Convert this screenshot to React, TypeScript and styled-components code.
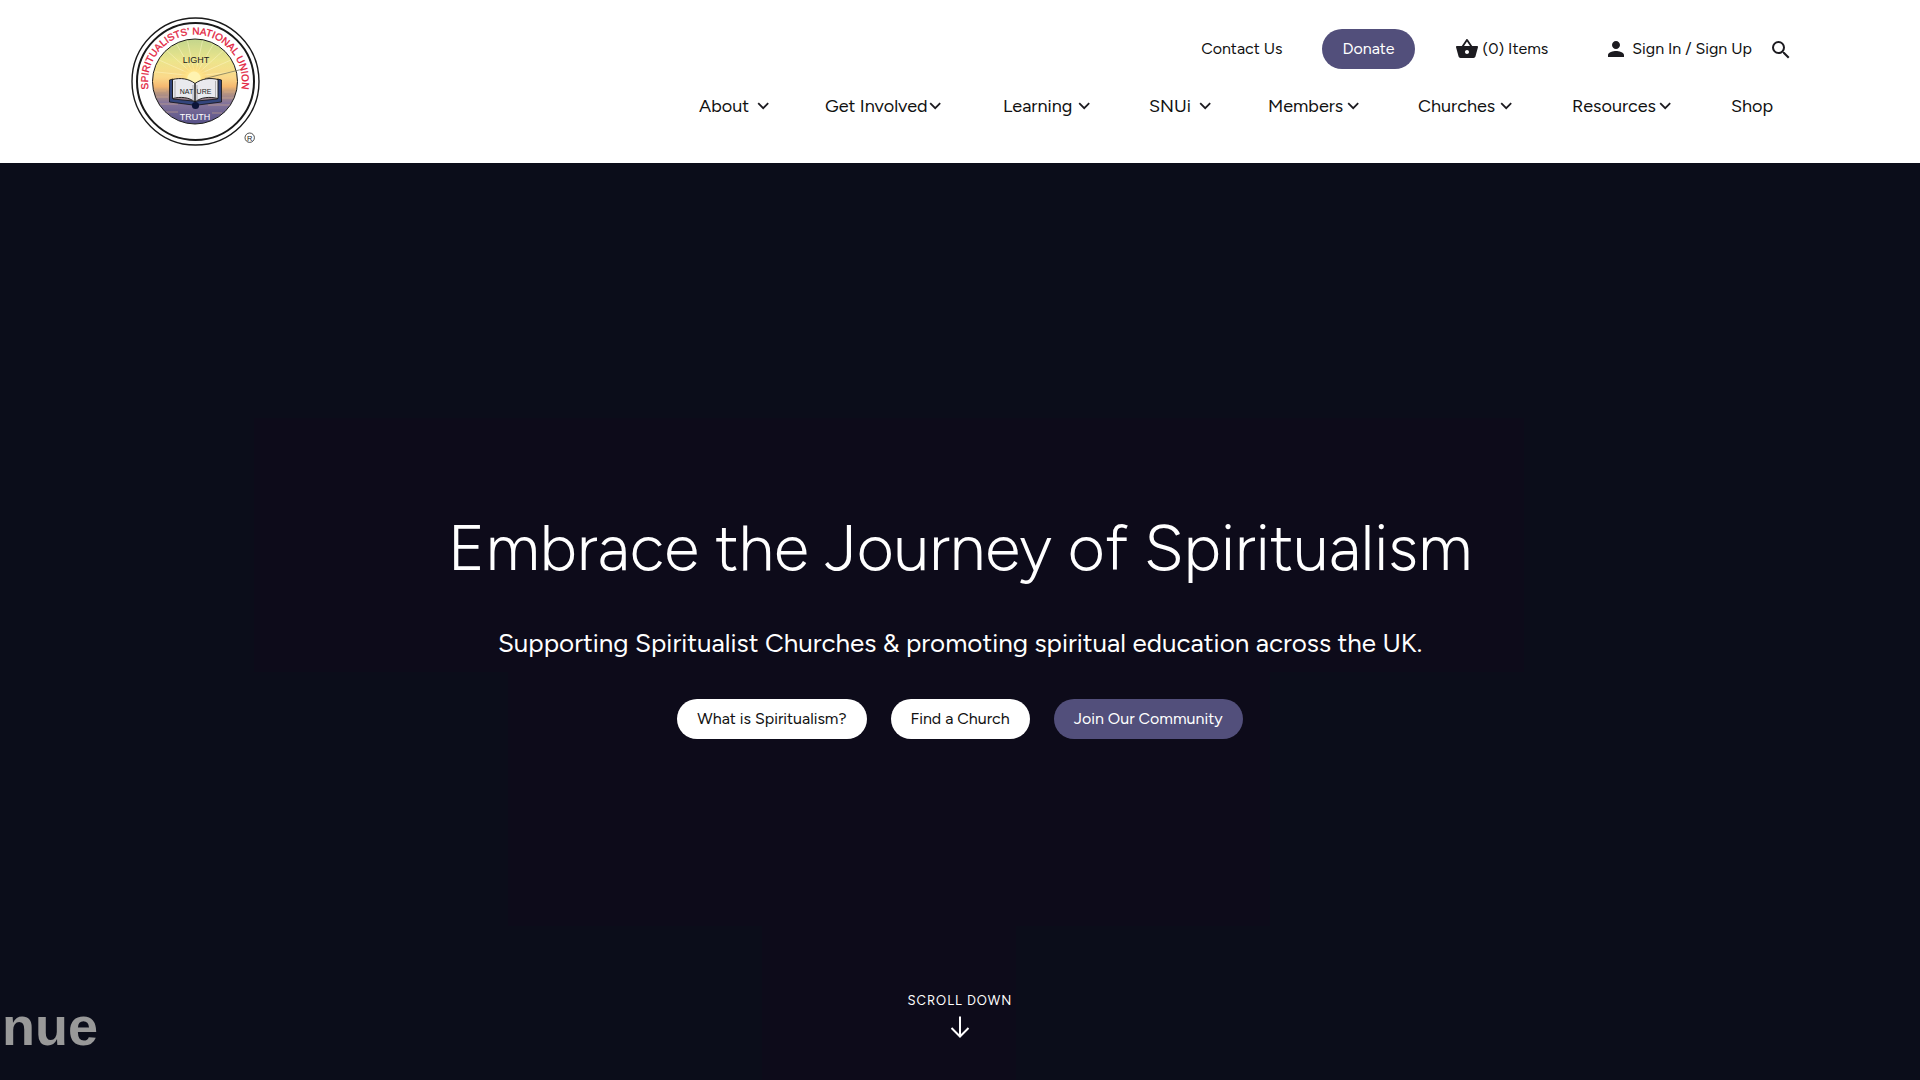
import React from 'react';
import styled, { createGlobalStyle } from 'styled-components';
import { MdPerson, MdSearch, MdShoppingBasket } from 'react-icons/md';

const GlobalStyle = createGlobalStyle`
  *, *::before, *::after { box-sizing: border-box; }
  body { margin: 0; background: #0b0d1a; font-family: Figtree, Roboto, "Liberation Sans", sans-serif; color: #111; }
  a { color: inherit; text-decoration: none; }
`;

const Page = styled.div`
  min-height: 100vh;
  display: flex;
  flex-direction: column;
`;

const Header = styled.header`
  background: #fff;
  padding: 16px 127px 15px 130px;
  display: flex;
  justify-content: space-between;
  align-items: flex-start;
`;

const LogoLink = styled.a`
  display: block;
  line-height: 0;
`;

const Menus = styled.div`
  display: flex;
  flex-direction: column;
  align-items: flex-end;
  padding-top: 13px;
`;

const UtilityBar = styled.div`
  display: flex;
  align-items: center;
  font-size: 16px;
  line-height: 24px;
`;

const UtilityLink = styled.a<{ $before?: number }>`
  display: flex;
  align-items: center;
  gap: 4px;
  margin-left: ${({ $before = 40 }) => $before}px;
`;

const UtilityIcon = styled.span`
  display: flex;
  font-size: 24px;
  color: #1c1b20;
`;

const SearchButton = styled.button`
  display: flex;
  margin: 0 0 0 17px;
  padding: 2px 0 0;
  border: 0;
  background: none;
  color: #1c1b20;
  font-size: 24px;
  cursor: pointer;
`;

const Pill = styled.a<{ $tone: 'light' | 'violet' }>`
  display: flex;
  align-items: center;
  height: 40px;
  padding: 0 20px;
  border-radius: 20px;
  font-size: 16px;
  line-height: 24px;
  white-space: nowrap;
  color: ${({ $tone }) => ($tone === 'light' ? '#111' : '#fff')};
  background: ${({ $tone }) => ($tone === 'light' ? '#fff' : '#524f7b')};
`;

const DonateSlot = styled.div`
  margin-left: 40px;
`;

const MainNav = styled.nav`
  margin-top: 24px;
  padding-right: 21px;
`;

const NavList = styled.ul`
  list-style: none;
  margin: 0;
  padding: 0;
  display: grid;
  grid-template-columns: 126px 178px 146px 119px 150px 154px 159px 41px;
`;

const NavLink = styled.a<{ $width: number }>`
  display: flex;
  align-items: center;
  justify-content: space-between;
  width: ${({ $width }) => $width}px;
  font-size: 18px;
  line-height: 26px;
  white-space: nowrap;
`;

const Hero = styled.main`
  --tile: 254px;
  --shade: linear-gradient(#0d0b1a, #0d0b1a);
  position: relative;
  flex: 1;
  display: grid;
  grid-template-rows: 1fr auto 1fr;
  justify-items: center;
  color: #fff;
  overflow: hidden;
  background-color: #0b0d1a;
  background-image: var(--shade), var(--shade), var(--shade);
  background-repeat: no-repeat;
  background-size: calc(5 * var(--tile)) var(--tile), calc(3 * var(--tile)) var(--tile), var(--tile) var(--tile);
  background-position: var(--tile) 255px, calc(2 * var(--tile)) 509px, calc(3 * var(--tile)) 763px;
`;

const HeroContent = styled.div`
  grid-row: 2;
  display: flex;
  flex-direction: column;
  align-items: center;
  gap: 36px;
  text-align: center;
`;

const Headline = styled.h1`
  margin: 0;
  font-size: 64px;
  line-height: 87px;
  font-weight: 300;
`;

const Tagline = styled.p`
  margin: 0;
  font-size: 26px;
  line-height: 32px;
`;

const Actions = styled.div`
  display: flex;
  gap: 24px;
  padding-top: 4px;
`;

const ScrollLink = styled.a`
  grid-row: 3;
  align-self: end;
  display: flex;
  flex-direction: column;
  align-items: center;
  gap: 4px;
  padding-bottom: 41px;
  font-size: 13px;
  line-height: 20px;
  letter-spacing: 1px;
`;

const Caption = styled.div`
  position: absolute;
  left: 2px;
  bottom: 24px;
  font-family: "Liberation Sans", Arial, sans-serif;
  font-weight: 700;
  font-size: 54px;
  line-height: 60px;
  color: #999;
`;

const Chevron = () => (
  <svg width="12" height="8" viewBox="0 0 12 8" fill="none" aria-hidden="true">
    <path d="M1.200 1.200 6.200 6.200l5-5" stroke="#1c1b20" strokeWidth="1.800" />
  </svg>
);

const ArrowDown = () => (
  <svg width="24" height="24" viewBox="0 0 24 24" fill="none" aria-hidden="true">
    <path d="M12 1.500v20M3.500 13l8.500 8.500 8.500-8.500" stroke="#fff" strokeWidth="2" />
  </svg>
);

const rays = [-84, -66, -48, -30, -12, 12, 30, 48, 66, 84];

const Logo = () => (
  <svg width="130" height="132" viewBox="130 16 130 132" role="img" aria-label="Spiritualists' National Union">
    <defs>
      <linearGradient id="sky" x1="0" y1="0" x2="0" y2="1">
        <stop offset="0" stopColor="#c3d68c" />
        <stop offset="0.250" stopColor="#ece58c" />
        <stop offset="0.450" stopColor="#fbd98a" />
        <stop offset="0.560" stopColor="#f5b870" />
        <stop offset="0.620" stopColor="#c09a7c" />
        <stop offset="0.750" stopColor="#85759a" />
        <stop offset="1" stopColor="#565089" />
      </linearGradient>
      <radialGradient id="sun">
        <stop offset="0" stopColor="#fffbd8" />
        <stop offset="0.500" stopColor="#ffe58a" />
        <stop offset="1" stopColor="#fbd36c" stopOpacity="0" />
      </radialGradient>
      <clipPath id="disc"><circle cx="195" cy="81.500" r="42.500" /></clipPath>
      <path id="arc" d="M149.600 93.700A47 47 0 1 1 240.400 93.700" />
    </defs>
    <circle cx="195.500" cy="81.500" r="63.500" fill="#fff" stroke="#1a1a1a" strokeWidth="1.400" />
    <circle cx="195.500" cy="81.500" r="58.500" fill="none" stroke="#1a1a1a" strokeWidth="2" />
    <circle cx="195" cy="81.500" r="42.500" fill="url(#sky)" />
    <g clipPath="url(#disc)">
      {rays.map((a) => (
        <path key={a} d="M195 76V30" transform={`rotate(${a} 195 76)`} stroke="#fff9c9" strokeWidth="0.700" opacity="0.600" />
      ))}
      <circle cx="194" cy="78" r="14" fill="url(#sun)" />
      <circle cx="194" cy="78" r="6.500" fill="#fff3b0" />
      <path d="M152 91h14M224 92h14M156 97h12M220 98h16M158 104h20M208 105h22M166 112h12M212 113h10" stroke="#e0b58c" strokeWidth="0.700" opacity="0.700" />
    </g>
    <circle cx="195" cy="81.500" r="42.500" fill="none" stroke="#1a1a1a" strokeWidth="1" />
    <path d="M205 78.500 243 69" stroke="#6b6a52" strokeWidth="0.700" />
    <path d="M169.500 80v22l23.500 3h5l23.500-3V80l-4-1v20l-20.500 2h-4l-20-2V79z" fill="#33457c" stroke="#111" strokeWidth="0.800" />
    <path d="M172.500 79.500c8-2 16-1 22.500 4v18.500c-6-5-15-5.500-22.500-3.500zM218 79.500c-8-2-16-1-23 4v18.500c6-5 15-5.500 23-3.500z" fill="#e9e9ee" stroke="#111" strokeWidth="0.900" />
    <path d="M193 85v15M197 85v15M175 81v16M215.500 81v16" stroke="#999" strokeWidth="0.700" />
    <circle cx="195.500" cy="105.500" r="3.600" fill="#0c1438" />
    <g fontFamily='"Liberation Sans", Arial, sans-serif' textAnchor="middle">
      <text x="196" y="62.500" fontSize="9" fill="#222">LIGHT</text>
      <text x="186.500" y="93.500" fontSize="7" fill="#222">NAT</text>
      <text x="204" y="93.500" fontSize="7" fill="#222">URE</text>
      <text x="195" y="120" fontSize="9" fill="#fff">TRUTH</text>
      <text fontSize="10" fill="#e2203c" stroke="#e2203c" strokeWidth="0.300">
        <textPath href="#arc" startOffset="50%">SPIRITUALISTS’ NATIONAL UNION</textPath>
      </text>
      <text x="249.700" y="140.500" fontSize="7.500" fill="#222">R</text>
    </g>
    <circle cx="249.700" cy="137.700" r="4.700" fill="none" stroke="#222" strokeWidth="0.800" />
  </svg>
);

const menu = [
  { label: 'About', width: 70 },
  { label: 'Get Involved', width: 116 },
  { label: 'Learning', width: 87 },
  { label: 'SNUi', width: 62 },
  { label: 'Members', width: 91 },
  { label: 'Churches', width: 94 },
  { label: 'Resources', width: 99 },
];

export default function App() {
  return (
    <Page>
      <GlobalStyle />
      <Header>
        <LogoLink href="#home"><Logo /></LogoLink>
        <Menus>
          <UtilityBar>
            <UtilityLink href="#contact">Contact Us</UtilityLink>
            <DonateSlot><Pill $tone="violet" href="#donate">Donate</Pill></DonateSlot>
            <UtilityLink href="#basket"><UtilityIcon><MdShoppingBasket /></UtilityIcon>(0) Items</UtilityLink>
            <UtilityLink href="#account" $before={56}><UtilityIcon><MdPerson /></UtilityIcon>Sign In / Sign Up</UtilityLink>
            <SearchButton type="button" aria-label="Search"><MdSearch /></SearchButton>
          </UtilityBar>
          <MainNav aria-label="Main">
            <NavList>
              {menu.map(({ label, width }) => (
                <li key={label}>
                  <NavLink href={`#${label.toLowerCase().replace(' ', '-')}`} $width={width}>{label}<Chevron /></NavLink>
                </li>
              ))}
              <li><NavLink href="#shop" $width={41}>Shop</NavLink></li>
            </NavList>
          </MainNav>
        </Menus>
      </Header>
      <Hero>
        <HeroContent>
          <Headline>Embrace the Journey of Spiritualism</Headline>
          <Tagline>Supporting Spiritualist Churches &amp; promoting spiritual education across the UK.</Tagline>
          <Actions>
            <Pill $tone="light" href="#what-is-spiritualism">What is Spiritualism?</Pill>
            <Pill $tone="light" href="#find-a-church">Find a Church</Pill>
            <Pill $tone="violet" href="#join">Join Our Community</Pill>
          </Actions>
        </HeroContent>
        <ScrollLink href="#more">SCROLL DOWN<ArrowDown /></ScrollLink>
        <Caption>nue</Caption>
      </Hero>
    </Page>
  );
}
